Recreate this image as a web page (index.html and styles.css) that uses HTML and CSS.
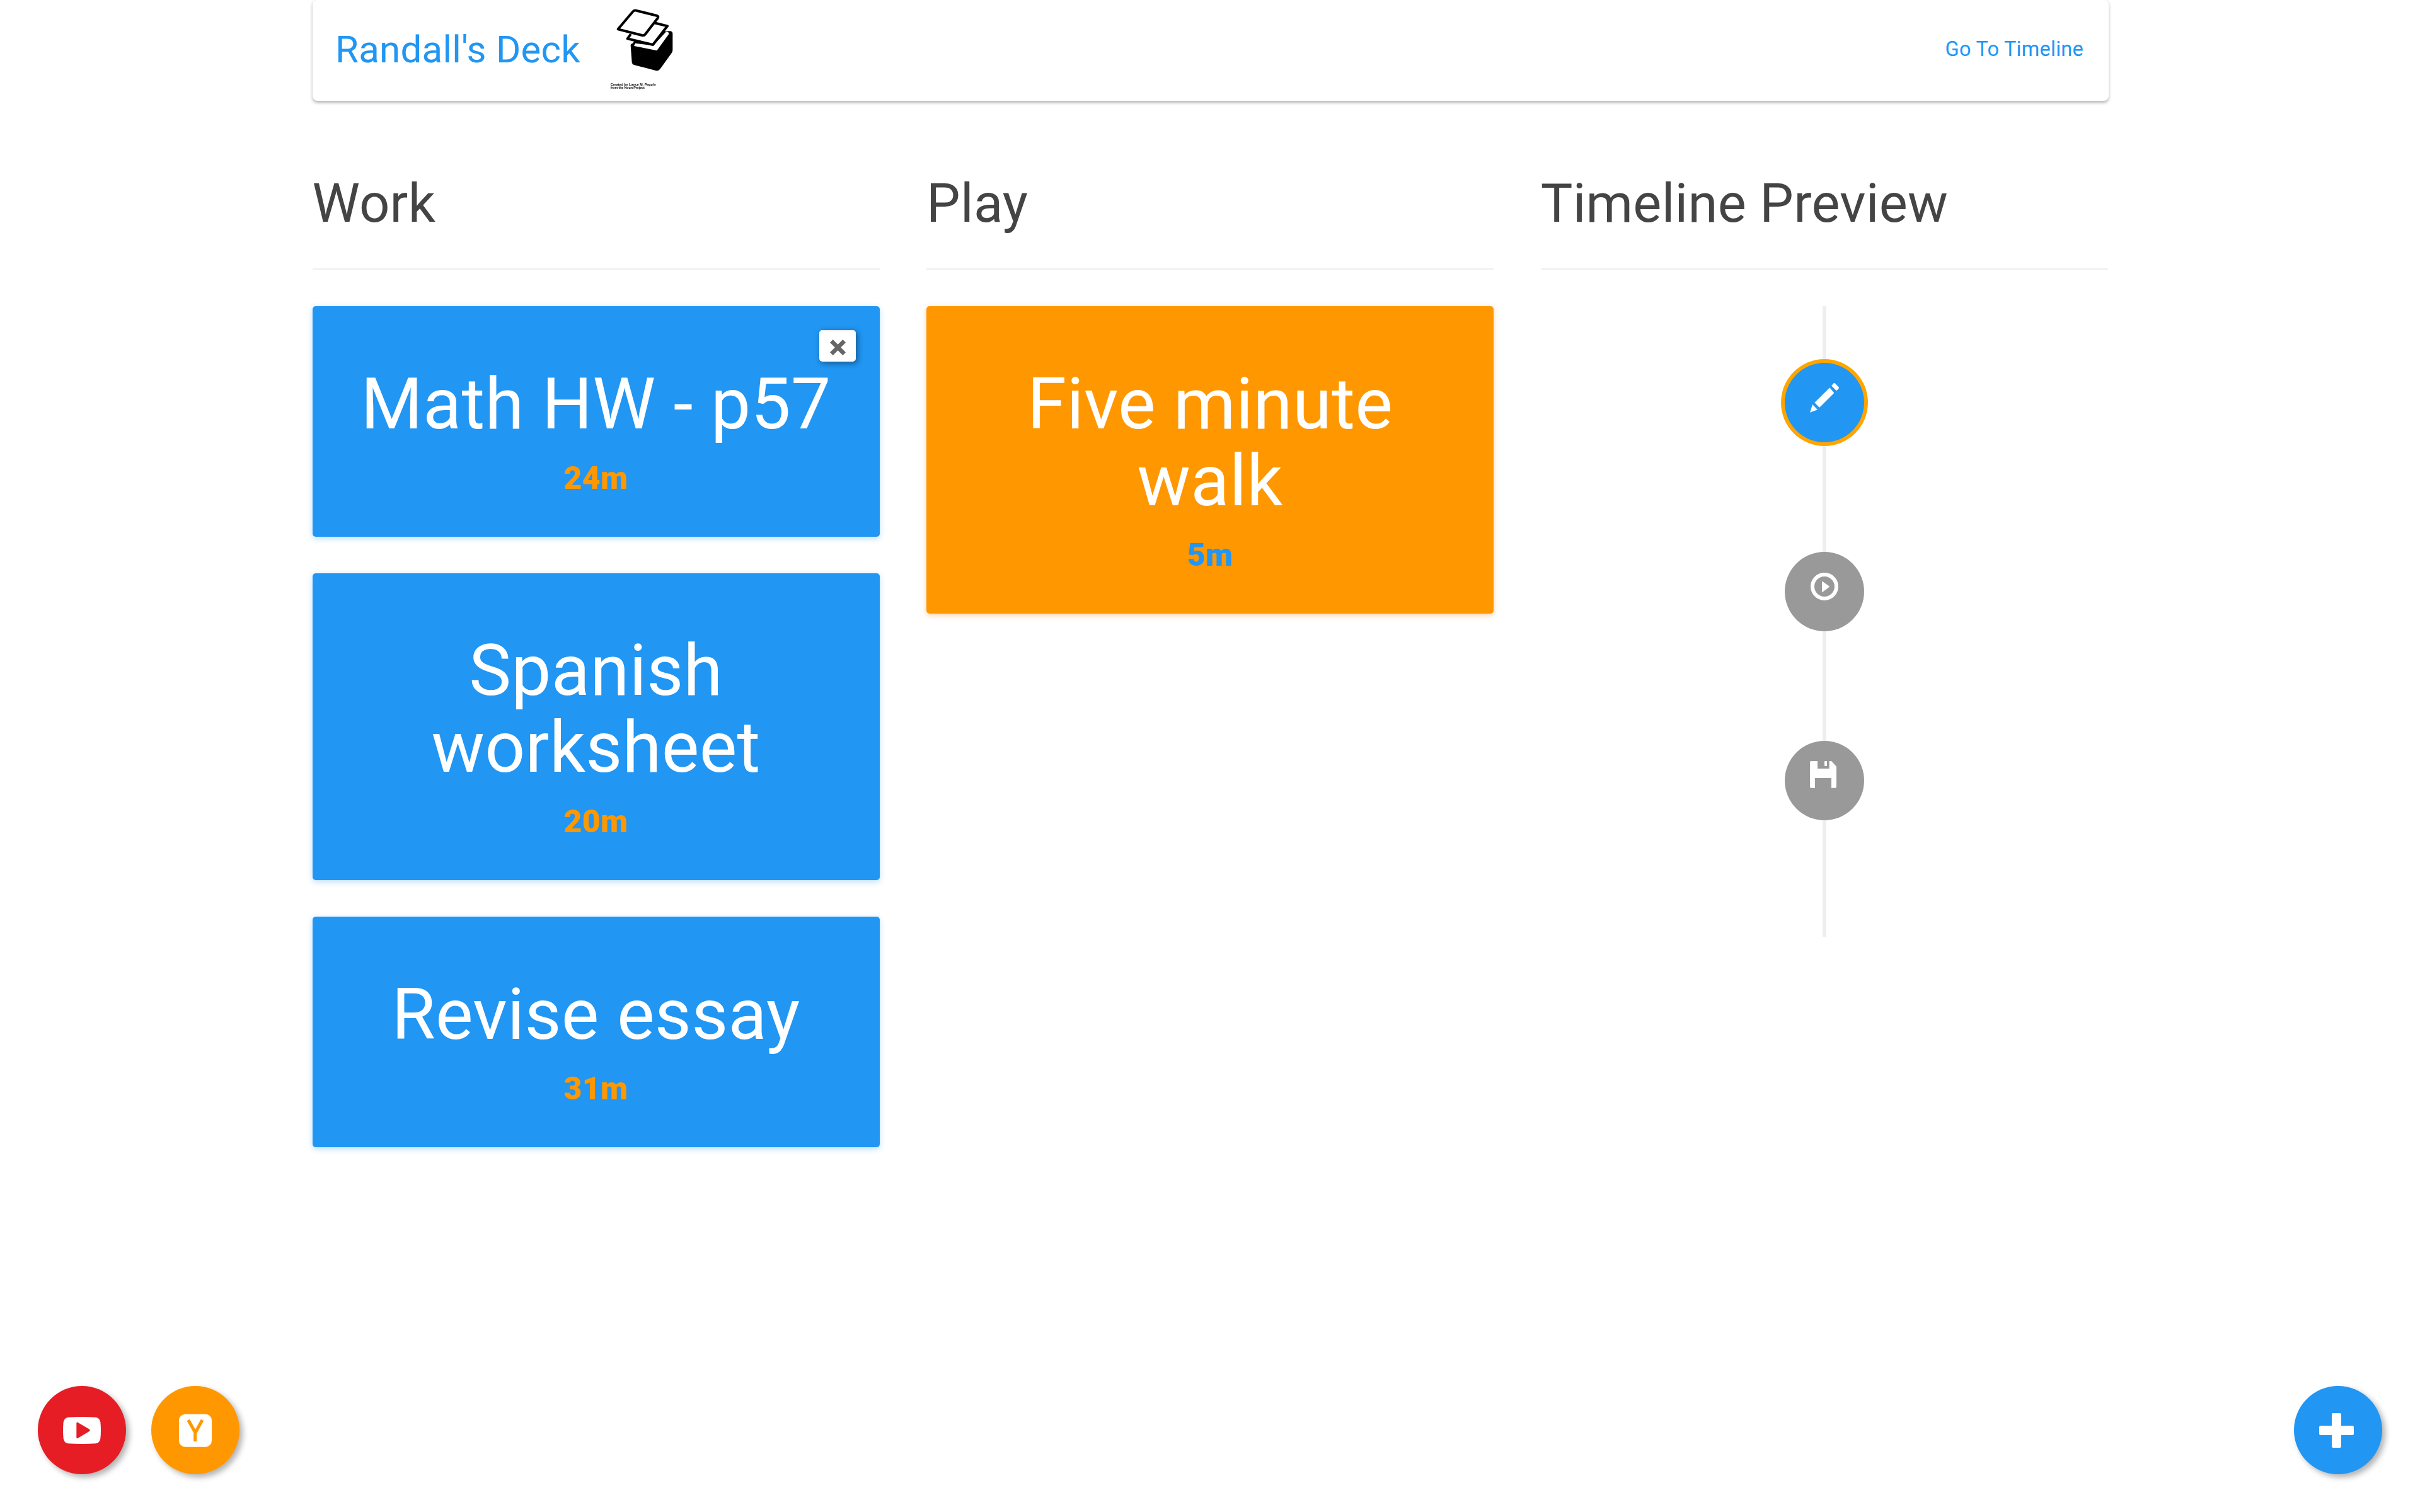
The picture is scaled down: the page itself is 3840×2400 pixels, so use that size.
FILE: index.html
```html
<!DOCTYPE html>
<html lang="en">
<head>
<meta charset="utf-8">
<title>Randall's Deck</title>
<link rel="stylesheet" href="styles.css">
</head>
<body>
<div class="container">
  <nav class="navbar">
    <a class="brand">Randall's Deck</a>
    <svg class="logo" viewBox="0 0 420 480">
      <path d="M152 216Q152 208 162 206L170 195 300 150 340 148Q352 150 352 160V238Q352 246 348 251L292 329Q284 338 274 337L168 309Q159 306 158 298Z" fill="#000"/>
      <path d="M174 206 260 217 320 152Q334 150 334 162L277 241 168 219Z" fill="#fff"/>
      <path d="M150 166 137 184 258 213 327 124 262 108" class="sheet"/>
      <path d="M92 139 163 55Q169 48 177 50L278 75Q286 78 281 86L222 163Q216 170 206 168Z" class="sheet"/>
      <text x="56" y="407" class="credit" textLength="216">Created by Lance M. Pagulo</text>
      <text x="56" y="424" class="credit" textLength="162">from the Noun Project</text>
    </svg>
    <a class="nav-link">Go To Timeline</a>
  </nav>
  <main class="columns">
    <section class="column">
      <h3 class="heading">Work</h3>
      <article class="card work">
        <button class="close" aria-label="Remove"><svg viewBox="0 0 24 24"><path d="M4.5 0 12 7.5 19.500 0 24 4.500 16.500 12 24 19.500 19.500 24 12 16.500 4.500 24 0 19.500 7.500 12 0 4.500Z"/></svg></button>
        <h2 class="title">Math HW - p57</h2>
        <p class="time">24m</p>
      </article>
      <article class="card work">
        <h2 class="title">Spanish worksheet</h2>
        <p class="time">20m</p>
      </article>
      <article class="card work">
        <h2 class="title">Revise essay</h2>
        <p class="time">31m</p>
      </article>
    </section>
    <section class="column">
      <h3 class="heading">Play</h3>
      <article class="card play">
        <h2 class="title">Five minute walk</h2>
        <p class="time">5m</p>
      </article>
    </section>
    <section class="column">
      <h3 class="heading">Timeline Preview</h3>
      <div class="timeline">
        <svg class="node active" viewBox="0 0 378 378"><path d="M120 236 132 198 156 223Z M142 189 214 118 235 143 165 213Z M222 109 231 99Q235 94 240 98L256 114Q260 118 257 122L246 133Z"/></svg>
        <svg class="node" viewBox="0 0 378 378"><circle cx="189" cy="165" r="57" class="ring"/><path d="M177 142Q177 139 180 141L211 163Q214 166 211 168L180 191Q177 193 177 190Z"/></svg>
        <svg class="node" viewBox="0 0 378 378"><path d="M126 96H156V132H212V96H222L246 122V218Q246 224 240 224H222V177H144V224H126Q120 224 120 218V102Q120 96 126 96Z M189 96H201V120H189Z"/></svg>
      </div>
    </section>
  </main>
</div>
<footer class="actions">
  <a class="fab red"><svg viewBox="0 0 420 420"><path d="M145 149Q210 145 275 149 294 151 298 172 302 211 298 250 294 272 275 274 210 278 145 274 126 272 122 250 118 211 122 172 126 151 145 149Z"/><path class="cut" d="M184 178Q184 170 191 174L246 206Q251 211 246 215L191 248Q184 252 184 245Z"/></svg></a>
  <a class="fab orange"><svg viewBox="0 0 420 420"><rect x="132" y="134" width="156" height="156" rx="30"/><path class="letter" d="M176 162 210 222 243 162M209 216V264"/></svg></a>
  <a class="fab blue"><svg viewBox="0 0 420 420"><path d="M187 129H218Q225 129 225 136V189H278Q285 189 285 196V227Q285 234 278 234H225V287Q225 294 218 294H187Q180 294 180 287V234H127Q120 234 120 227V196Q120 189 127 189H180V136Q180 129 187 129Z"/></svg></a>
</footer>
</body>
</html>
```
FILE: styles.css
```css
* { box-sizing: border-box; }
body {
  margin: 0;
  height: 2400px;
  display: flex;
  flex-direction: column;
  justify-content: space-between;
  background: #fff;
  color: #666;
  font-family: Roboto, "Liberation Sans", sans-serif;
  font-size: 32.5px;
  letter-spacing: .25px;
  overflow: hidden;
}
.container { width: 2850px; margin: 0 0 0 495.5px; }
.navbar {
  height: 160px;
  display: flex;
  align-items: center;
  padding: 0 39.5px 0 36.5px;
  border-radius: 7.5px;
  box-shadow: 0 2.5px 5px rgba(0, 0, 0, .3);
  color: #2196f3;
}
.brand { font-size: 60px; line-height: 60px; padding-bottom: 3px; }
.logo { width: 140px; height: 160px; margin-left: 29.5px; filter: blur(.5px); }
.sheet { fill: #fff; stroke: #000; stroke-width: 12px; stroke-linejoin: round; stroke-linecap: round; }
.credit { font: bold 16px "Liberation Sans", sans-serif; letter-spacing: 0; fill: #000; }
.nav-link { margin-left: auto; padding-bottom: 4px; }
.columns { display: flex; gap: 74.6px; padding-top: 113px; }
.column { width: 900px; }
.heading {
  height: 155px;
  margin: 0 0 58px;
  padding-top: 3px;
  border-bottom: 2.5px solid #eee;
  color: #444;
  font-size: 85px;
  font-weight: 400;
  line-height: 94px;
}
.card {
  position: relative;
  margin-bottom: 57.8px;
  padding: 94.5px 75px 60.300px;
  border-radius: 5px;
  color: #fff;
  text-align: center;
}
.work { background: #2196f3; box-shadow: 0 2.5px 10px rgba(33, 150, 243, .3); }
.play { background: #ff9800; box-shadow: 0 2.5px 10px rgba(255, 120, 0, .3); }
.title { margin: 0; font-size: 112.5px; font-weight: 400; line-height: 122px; }
.time { margin: 24px 0 0; font-size: 50px; font-weight: 900; line-height: 65px; }
.work .time { color: #ff9800; }
.play .time { color: #2196f3; }
.close {
  position: absolute;
  top: 38px;
  right: 37.5px;
  width: 58px;
  height: 50px;
  display: grid;
  place-items: center;
  padding: 4px 0 0 1px;
  border: 0;
  border-radius: 5px;
  background: #fff;
  box-shadow: inset 0 2px #eee, 2.5px 2.5px 10px rgba(0, 0, 0, .4);
}
.close svg { width: 25px; height: 25px; fill: #666; }
.timeline {
  height: 1001px;
  display: flex;
  flex-direction: column;
  align-items: center;
  gap: 174px;
  padding-top: 90px;
  background: linear-gradient(#eee, #eee) center / 6px 100% no-repeat;
}
.node { width: 126px; height: 126px; border-radius: 50%; background: #999; fill: #fff; }
.active { background: #2196f3; box-shadow: 0 0 0 6px orange; }
.ring { fill: none; stroke: #fff; stroke-width: 18; }
.actions { display: flex; gap: 40px; padding: 0 60px; margin-bottom: 60px; }
.fab { width: 140px; height: 140px; border-radius: 50%; box-shadow: 5px 5px 10px rgba(0, 0, 0, .3); }
.fab svg { display: block; width: 140px; height: 140px; fill: #fff; }
.red { background: #e61d25; }
.red .cut { fill: #e61d25; }
.orange { background: #ff9800; }
.letter { fill: none; stroke: #ff9800; stroke-width: 15; }
.blue { margin-left: auto; background: #2196f3; }
```
